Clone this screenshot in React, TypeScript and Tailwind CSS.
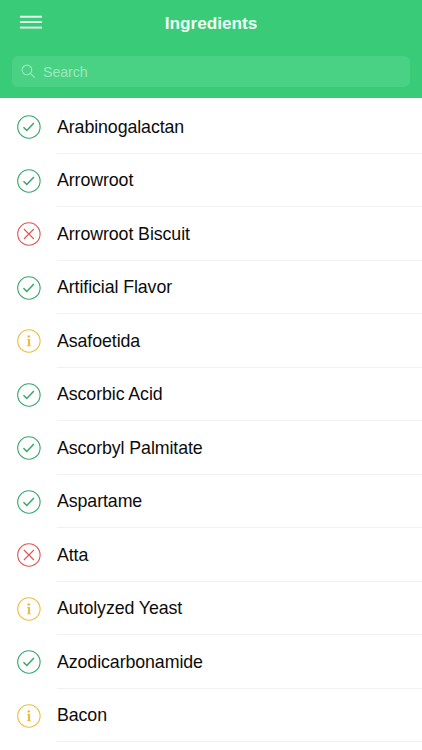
type Status = 'safe' | 'avoid' | 'info'

interface Ingredient {
  name: string
  status: Status
}

const ingredients: Ingredient[] = [
  { name: 'Arabinogalactan', status: 'safe' },
  { name: 'Arrowroot', status: 'safe' },
  { name: 'Arrowroot Biscuit', status: 'avoid' },
  { name: 'Artificial Flavor', status: 'safe' },
  { name: 'Asafoetida', status: 'info' },
  { name: 'Ascorbic Acid', status: 'safe' },
  { name: 'Ascorbyl Palmitate', status: 'safe' },
  { name: 'Aspartame', status: 'safe' },
  { name: 'Atta', status: 'avoid' },
  { name: 'Autolyzed Yeast', status: 'info' },
  { name: 'Azodicarbonamide', status: 'safe' },
  { name: 'Bacon', status: 'info' },
]

const statusColors: Record<Status, string> = {
  safe: 'text-[#35a768]',
  avoid: 'text-[#e05252]',
  info: 'text-[#ecbd3c]',
}

function StatusIcon({ status }: { status: Status }) {
  return (
    <svg
      className={`size-6 shrink-0 ${statusColors[status]}`}
      viewBox="0 0 24 24"
      fill="none"
      stroke="currentColor"
      strokeWidth={1.1}
    >
      <circle cx="11.9" cy="12" r="11.2" />
      {status === 'safe' && <path strokeWidth={1.5} d="M6.5 12.2l3.3 3.3 7.1-7.4" />}
      {status === 'avoid' && <path d="M6.9 7l10 10M16.9 7l-10 10" />}
      {status === 'info' && (
        <g fill="currentColor" stroke="none">
          <circle cx="11.8" cy="7.5" r="1.35" />
          <path d="M10 9.9h3.1v6.5h1v.9H9.8v-.9h1.1v-5.6H10z" />
        </g>
      )}
    </svg>
  )
}

function Header() {
  return (
    <header className="h-[98px] bg-[#3acb78] px-3">
      <div className="grid h-14 grid-cols-[1fr_auto_1fr] items-start">
        <button className="ml-2 mt-[15px] w-[22px]" aria-label="Menu">
          <svg className="h-[15px] w-[22px]" viewBox="0 0 22 15" fill="none" strokeWidth={2}>
            <path stroke="#e3f8ec" d="M0 1.8h22M0 7.1h22" />
            <path stroke="#d3f4e0" d="M0 12.6h22" />
          </svg>
        </button>
        <h1 className="mt-[11px] text-[17.2px] leading-6 font-bold text-[#effcf4]">Ingredients</h1>
      </div>
      <div className="flex h-[31px] items-center rounded-md bg-[#4ad284] pl-[9px] text-[#9ce8bd]">
        <svg className="size-[15px]" viewBox="0 0 15 15" fill="none" stroke="currentColor" strokeWidth={1.1}>
          <circle cx="5.9" cy="5.9" r="4.8" />
          <path d="M9.4 9.4l4.3 4.3" />
        </svg>
        <span className="ml-[7px] text-[14.2px] leading-5 tracking-[-0.05px]">Search</span>
      </div>
    </header>
  )
}

function App() {
  return (
    <div className="h-[750px] overflow-hidden bg-white font-['Liberation_Sans',Arial,sans-serif]">
      <Header />
      <ul className="pt-[2.3px]">
        {ingredients.map(({ name, status }) => (
          <li key={name} className="flex h-[53.52px] items-center pl-[17px]">
            <StatusIcon status={status} />
            <div className="ml-4 flex h-full flex-1 items-center border-b border-[#f1f1f2] pt-px text-[17.8px] tracking-[-0.09px] text-[#0c0c0c]">
              {name}
            </div>
          </li>
        ))}
      </ul>
    </div>
  )
}

export default App
